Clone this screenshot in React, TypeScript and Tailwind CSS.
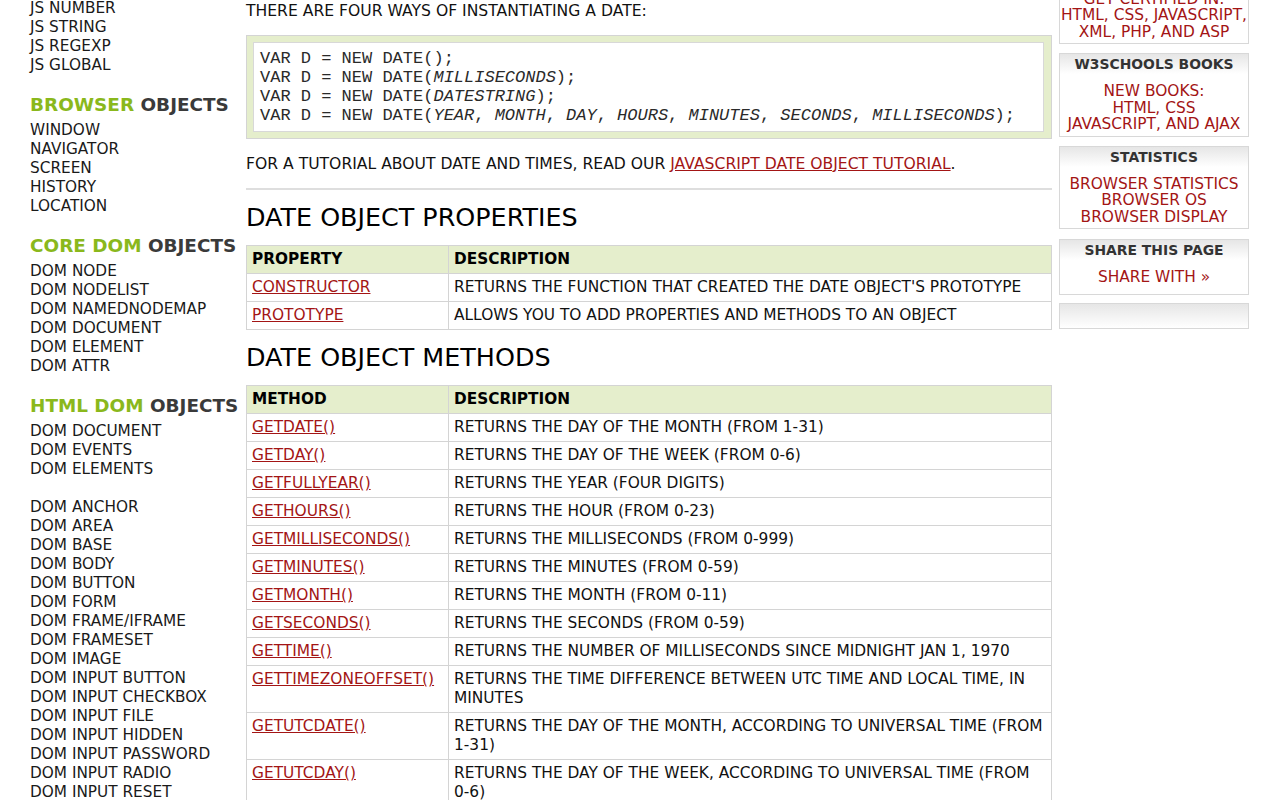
import React from "react";

const LINK = "text-[#a31515] underline decoration-[#a31515]";

const jsItems = ["JS NUMBER", "JS STRING", "JS REGEXP", "JS GLOBAL"];
const browserItems = ["WINDOW", "NAVIGATOR", "SCREEN", "HISTORY", "LOCATION"];
const coreItems = ["DOM NODE", "DOM NODELIST", "DOM NAMEDNODEMAP", "DOM DOCUMENT", "DOM ELEMENT", "DOM ATTR"];
const htmlItems = [
  "DOM DOCUMENT",
  "DOM EVENTS",
  "DOM ELEMENTS",
  "",
  "DOM ANCHOR",
  "DOM AREA",
  "DOM BASE",
  "DOM BODY",
  "DOM BUTTON",
  "DOM FORM",
  "DOM FRAME/IFRAME",
  "DOM FRAMESET",
  "DOM IMAGE",
  "DOM INPUT BUTTON",
  "DOM INPUT CHECKBOX",
  "DOM INPUT FILE",
  "DOM INPUT HIDDEN",
  "DOM INPUT PASSWORD",
  "DOM INPUT RADIO",
  "DOM INPUT RESET",
];

function ItemList({ items }: { items: string[] }) {
  return (
    <ul className="flex flex-col">
      {items.map((t, i) => (
        <li key={i} className="h-[19px] leading-[19px] text-[15.3px] text-[#1a1a1a] whitespace-nowrap">
          {t}
        </li>
      ))}
    </ul>
  );
}

function SideHeading({ green, dark }: { green: string; dark: string }) {
  return (
    <h2 className="mt-[19.5px] mb-[4.5px] h-[22px] leading-[22px] text-[18.4px] font-bold whitespace-nowrap">
      <span className="text-[#8ab81c]">{green}</span> <span className="text-[#3a3a3a]">{dark}</span>
    </h2>
  );
}

const props = [
  ["CONSTRUCTOR", "RETURNS THE FUNCTION THAT CREATED THE DATE OBJECT'S PROTOTYPE"],
  ["PROTOTYPE", "ALLOWS YOU TO ADD PROPERTIES AND METHODS TO AN OBJECT"],
];

const methods = [
  ["GETDATE()", "RETURNS THE DAY OF THE MONTH (FROM 1-31)"],
  ["GETDAY()", "RETURNS THE DAY OF THE WEEK (FROM 0-6)"],
  ["GETFULLYEAR()", "RETURNS THE YEAR (FOUR DIGITS)"],
  ["GETHOURS()", "RETURNS THE HOUR (FROM 0-23)"],
  ["GETMILLISECONDS()", "RETURNS THE MILLISECONDS (FROM 0-999)"],
  ["GETMINUTES()", "RETURNS THE MINUTES (FROM 0-59)"],
  ["GETMONTH()", "RETURNS THE MONTH (FROM 0-11)"],
  ["GETSECONDS()", "RETURNS THE SECONDS (FROM 0-59)"],
  ["GETTIME()", "RETURNS THE NUMBER OF MILLISECONDS SINCE MIDNIGHT JAN 1, 1970"],
  ["GETTIMEZONEOFFSET()", "RETURNS THE TIME DIFFERENCE BETWEEN UTC TIME AND LOCAL TIME, IN MINUTES"],
  ["GETUTCDATE()", "RETURNS THE DAY OF THE MONTH, ACCORDING TO UNIVERSAL TIME (FROM 1-31)"],
  ["GETUTCDAY()", "RETURNS THE DAY OF THE WEEK, ACCORDING TO UNIVERSAL TIME (FROM 0-6)"],
  ["GETUTCFULLYEAR()", "RETURNS THE YEAR, ACCORDING TO UNIVERSAL TIME (FOUR DIGITS)"],
];

function RefTable({ head, rows }: { head: string; rows: string[][] }) {
  return (
    <table className="w-full table-fixed border-collapse border border-[#d4d4d4] text-[15.4px] leading-[19px]">
      <thead>
        <tr className="bg-[#e5eecc]">
          <th className="w-[202px] border border-[#d4d4d4] px-[5px] py-[4px] text-left text-[15.3px] font-bold text-black">
            {head}
          </th>
          <th className="border border-[#d4d4d4] px-[5px] py-[4px] text-left text-[15.3px] font-bold text-black">
            DESCRIPTION
          </th>
        </tr>
      </thead>
      <tbody>
        {rows.map((r, i) => (
          <tr key={i}>
            <td className="border border-[#d4d4d4] px-[5px] py-[4px] align-top whitespace-nowrap">
              <a className={LINK} href="#">
                {r[0]}
              </a>
            </td>
            <td className="border border-[#d4d4d4] pl-[5px] pr-[4px] py-[4px] align-top text-[#111]">{r[1]}</td>
          </tr>
        ))}
      </tbody>
    </table>
  );
}

function SideBox({ title, links, extra }: { title?: string; links?: string[]; extra?: boolean }) {
  return (
    <div className="border border-[#d8d8d8] bg-white">
      {title ? (
        <div className="bg-gradient-to-b from-[#e6e6e6] to-white">
          <div className="pt-[1px] h-[20px] leading-[19px] text-center text-[13.9px] font-bold text-[#333] whitespace-nowrap">
            {title}
          </div>
        </div>
      ) : (
        <div className="h-[24px] bg-gradient-to-b from-[#e6e6e6] to-white" />
      )}
      {links && (
        <div className={`pt-[9px] flex flex-col items-center ${extra ? "pb-[8.5px]" : "pb-[3px]"}`}>
          {links.map((l, i) => (
            <a key={i} href="#" className="h-[16.5px] leading-[16.5px] text-[15.4px] text-[#a31515] whitespace-nowrap">
              {l}
            </a>
          ))}
        </div>
      )}
    </div>
  );
}

export default function App() {
  return (
    <div className="w-[1280px] h-[800px] overflow-hidden bg-white pt-[1px] font-['DejaVu_Sans',Verdana,sans-serif] text-[#111]">
      <div className="flex pl-[30px]">
        {/* Left sidebar */}
        <aside className="w-[216px] shrink-0 -mt-[2.5px]">
          <ItemList items={jsItems} />
          <SideHeading green="BROWSER" dark="OBJECTS" />
          <ItemList items={browserItems} />
          <SideHeading green="CORE DOM" dark="OBJECTS" />
          <ItemList items={coreItems} />
          <SideHeading green="HTML DOM" dark="OBJECTS" />
          <ItemList items={htmlItems} />
        </aside>

        {/* Main */}
        <main className="w-[806px] shrink-0 text-[15.6px] leading-[19px]">
          <p className="pt-[0.5px] whitespace-nowrap">THERE ARE FOUR WAYS OF INSTANTIATING A DATE:</p>
          <div className="mt-[14px] border border-[#d4d4d4] bg-[#e5eecc] pt-[6px] pb-[6px] pl-[6px] pr-[7px]">
            <div className="border border-[#d8d8d8] bg-white pt-[6px] pb-[6px] pl-[6px] font-['Liberation_Mono','Courier_New',monospace] text-[17px] leading-[19px] text-[#2a2a2a] whitespace-pre">
              <div>VAR D = NEW DATE();</div>
              <div>
                VAR D = NEW DATE(<i>MILLISECONDS</i>);
              </div>
              <div>
                VAR D = NEW DATE(<i>DATESTRING</i>);
              </div>
              <div>
                VAR D = NEW DATE(<i>YEAR</i>, <i>MONTH</i>, <i>DAY</i>, <i>HOURS</i>, <i>MINUTES</i>, <i>SECONDS</i>,{" "}
                <i>MILLISECONDS</i>);
              </div>
            </div>
          </div>
          <p className="mt-[16px] whitespace-nowrap">
            FOR A TUTORIAL ABOUT DATE AND TIMES, READ OUR{" "}
            <a className={LINK} href="#">
              JAVASCRIPT DATE OBJECT TUTORIAL
            </a>
            .
          </p>
          <hr className="mt-[14.5px] border-0 h-[2px] bg-[#dedede]" />
          <h2 className="mt-[11px] mb-[12px] h-[32px] leading-[32px] text-[25.4px] font-normal text-black whitespace-nowrap">
            DATE OBJECT PROPERTIES
          </h2>
          <RefTable head="PROPERTY" rows={props} />
          <h2 className="mt-[11px] mb-[12px] h-[32px] leading-[32px] text-[25.4px] font-normal text-black whitespace-nowrap">
            DATE OBJECT METHODS
          </h2>
          <RefTable head="METHOD" rows={methods} />
        </main>

        {/* Right sidebar */}
        <aside className="ml-[7px] w-[190px] shrink-0 -mt-[40.5px] flex flex-col">
          <SideBox title="W3SCHOOLS CERTIFICATION" links={["GET CERTIFIED IN:", "HTML, CSS, JAVASCRIPT,", "XML, PHP, AND ASP"]} />
          <div className="mt-[9px]">
            <SideBox title="W3SCHOOLS BOOKS" links={["NEW BOOKS:", "HTML, CSS", "JAVASCRIPT, AND AJAX"]} />
          </div>
          <div className="mt-[9px]">
            <SideBox title="STATISTICS" links={["BROWSER STATISTICS", "BROWSER OS", "BROWSER DISPLAY"]} />
          </div>
          <div className="mt-[10px]">
            <SideBox title="SHARE THIS PAGE" links={["SHARE WITH »"]} extra />
          </div>
          <div className="mt-[8px]">
            <SideBox />
          </div>
        </aside>
      </div>
    </div>
  );
}
